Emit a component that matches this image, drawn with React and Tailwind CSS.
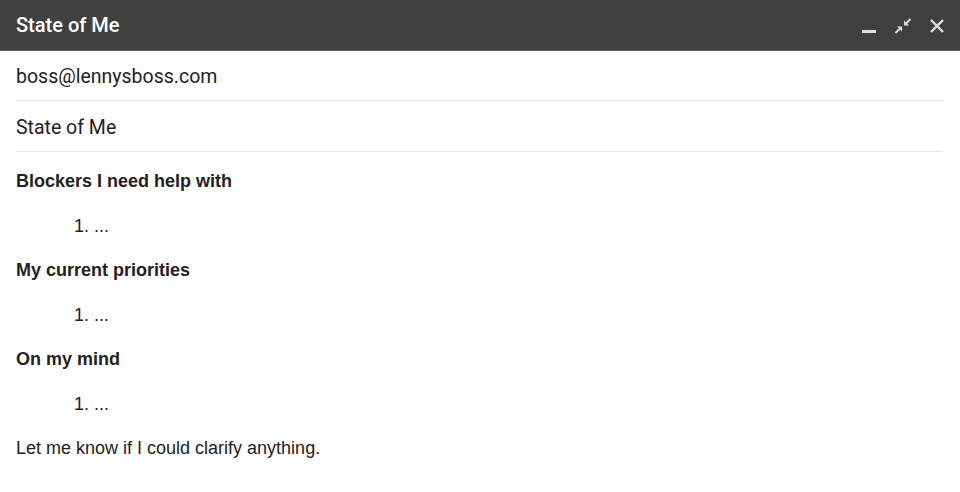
import React from "react";

function MinIcon() {
  return (
    <svg width="16" height="16" viewBox="0 0 16 16" className="block">
      <rect x="1" y="12" width="14" height="3" fill="#e0e0e0" />
    </svg>
  );
}

function CollapseIcon() {
  return (
    <svg width="18" height="16" viewBox="0 0 18 16" className="block">
      <path d="M16.5 1 L11.5 6" stroke="#e0e0e0" strokeWidth="2" />
      <path d="M10 2.5 L10 7.5 L15 7.5 Z" fill="#e0e0e0" />
      <path d="M1.5 15 L6.5 10" stroke="#e0e0e0" strokeWidth="2" />
      <path d="M3 8.5 L8 8.5 L8 13.5 Z" fill="#e0e0e0" />
    </svg>
  );
}

function CloseIcon() {
  return (
    <svg width="16" height="16" viewBox="0 0 16 16" className="block">
      <path d="M2 2 L14 14 M14 2 L2 14" stroke="#e0e0e0" strokeWidth="2.4" />
    </svg>
  );
}

export default function App() {
  const roboto = { fontFamily: "Roboto, 'Noto Sans', sans-serif" };
  return (
    <div className="w-[960px] h-[492px] bg-white overflow-hidden">
      <div
        className="h-[51px] bg-[#404040] flex items-center justify-between pl-4 pr-[15px] border-b border-[#5a5a5a]"
        style={roboto}
      >
        <span className="text-white text-[20px] font-medium leading-none">State of Me</span>
        <div className="flex items-center gap-[17px] mt-[1px]">
          <MinIcon />
          <CollapseIcon />
          <CloseIcon />
        </div>
      </div>
      <div className="px-4 pr-[17px]" style={roboto}>
        <div className="h-[50px] flex items-center border-b border-[#e6e6e6] text-[19.5px] text-[#222] pt-[3px]">
          boss@lennysboss.com
        </div>
        <div className="h-[51px] flex items-center border-b border-[#e6e6e6] text-[19.5px] text-[#222] pt-[3px]">
          State of Me
        </div>
      </div>
      <div
        className="px-4 pt-[19px] text-[18px] text-[#222] leading-[20px]"
        style={{ fontFamily: "'Liberation Sans', Arial, sans-serif" }}
      >
        <div className="font-bold">Blockers I need help with</div>
        <div className="pl-[58px] mt-[25px]">1. ...</div>
        <div className="font-bold mt-[24px]">My current priorities</div>
        <div className="pl-[58px] mt-[25px]">1. ...</div>
        <div className="font-bold mt-[24px]">On my mind</div>
        <div className="pl-[58px] mt-[25px]">1. ...</div>
        <div className="mt-[24px]">Let me know if I could clarify anything.</div>
      </div>
    </div>
  );
}
